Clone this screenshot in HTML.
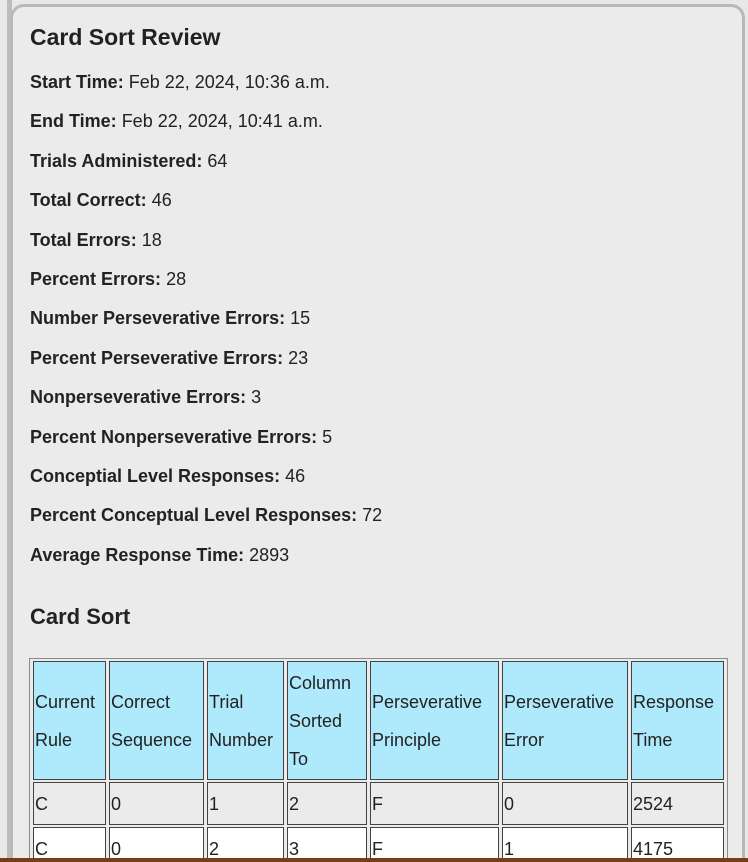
<!DOCTYPE html>
<html><head><meta charset="utf-8"><style>
html,body{margin:0;padding:0;width:748px;height:862px;overflow:hidden;background:#e8e8e8;font-family:"Liberation Sans",sans-serif;color:#222}
.clip{position:absolute;left:0;top:0;width:748px;height:858px;overflow:hidden}
.bar{position:absolute;left:7px;top:0;width:5px;height:858px;background:#bcbcbc}
.panel{position:absolute;left:10px;top:4px;width:735px;height:900px;background:#ebebeb;border:3px solid #b8b8b8;border-radius:14px;box-sizing:border-box}
.bottom{position:absolute;left:0;top:858px;width:748px;height:4px;background:#7a3c12}
h1{position:absolute;left:30px;top:24px;margin:0;font-size:23px;font-weight:bold;color:#222}
h2{position:absolute;left:30px;top:604px;margin:0;font-size:22px;font-weight:bold;color:#222}
.f{position:absolute;left:30px;font-size:18px;white-space:nowrap}
.f b{font-weight:bold}
table{position:absolute;left:29px;top:658px;border:1px solid #8a8a8a;border-spacing:3px 2px;table-layout:fixed;font-size:18px;border-collapse:separate}
td,th{border:1px solid #444;padding:0 1px;text-align:left;font-weight:normal;line-height:38px;vertical-align:middle;white-space:nowrap;overflow:hidden}
th{background:#aee9fc;height:117px}
td{height:41px;line-height:40px;background:#ebebeb}
tr.w td{background:#fff}
</style></head><body>
<div class="clip">
<div class="bar"></div>
<div class="panel"></div>
<h1>Card Sort Review</h1>
<div class="f" style="top:72px"><b>Start Time:</b> Feb 22, 2024, 10:36 a.m.</div>
<div class="f" style="top:111px"><b>End Time:</b> Feb 22, 2024, 10:41 a.m.</div>
<div class="f" style="top:151px"><b>Trials Administered:</b> 64</div>
<div class="f" style="top:190px"><b>Total Correct:</b> 46</div>
<div class="f" style="top:230px"><b>Total Errors:</b> 18</div>
<div class="f" style="top:269px"><b>Percent Errors:</b> 28</div>
<div class="f" style="top:308px"><b>Number Perseverative Errors:</b> 15</div>
<div class="f" style="top:348px"><b>Percent Perseverative Errors:</b> 23</div>
<div class="f" style="top:387px"><b>Nonperseverative Errors:</b> 3</div>
<div class="f" style="top:427px"><b>Percent Nonperseverative Errors:</b> 5</div>
<div class="f" style="top:466px"><b>Conceptial Level Responses:</b> 46</div>
<div class="f" style="top:505px"><b>Percent Conceptual Level Responses:</b> 72</div>
<div class="f" style="top:545px"><b>Average Response Time:</b> 2893</div>
<h2>Card Sort</h2>
<table>
<colgroup><col style="width:73px"><col style="width:95px"><col style="width:77px"><col style="width:80px"><col style="width:129px"><col style="width:126px"><col style="width:93px"></colgroup>
<tr><th>Current<br>Rule</th><th>Correct<br>Sequence</th><th>Trial<br>Number</th><th>Column<br>Sorted<br>To</th><th>Perseverative<br>Principle</th><th>Perseverative<br>Error</th><th>Response<br>Time</th></tr>
<tr><td>C</td><td>0</td><td>1</td><td>2</td><td>F</td><td>0</td><td>2524</td></tr>
<tr class="w"><td>C</td><td>0</td><td>2</td><td>3</td><td>F</td><td>1</td><td>4175</td></tr>
</table>
</div>
<div class="bottom"></div>
</body></html>
